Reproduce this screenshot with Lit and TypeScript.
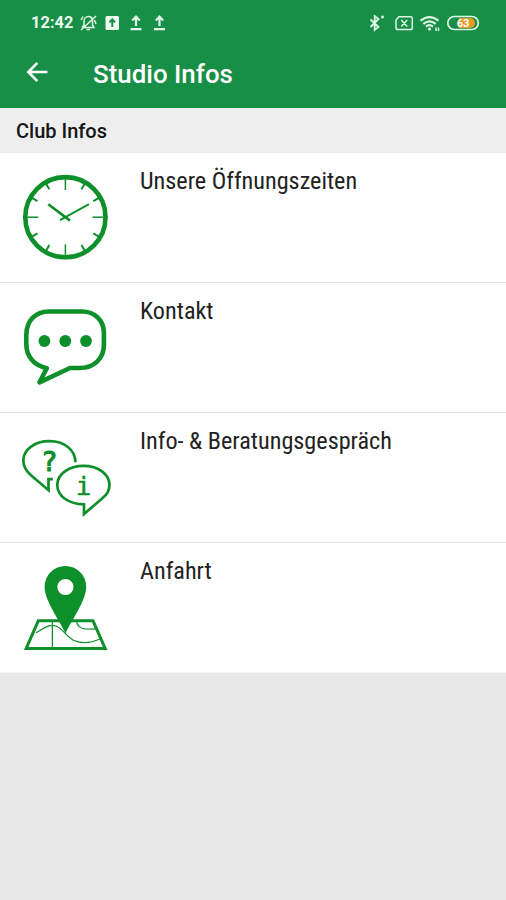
import { LitElement, html, svg, css } from "lit";
import { customElement } from "lit/decorators.js";

const clock = svg`
  <circle cx="65.4" cy="64.2" r="40.1" stroke-width="4.6" />
  ${[...Array(12).keys()].map((i) =>
    i % 3 === 0
      ? svg`<path d="M65.4 26V37" stroke-width="1.5" transform="rotate(${i * 30} 65.4 64.2)" />`
      : svg`<path d="M65.4 25V32" stroke-width="2" transform="rotate(${i * 30} 65.4 64.2)" />`
  )}
  <path d="M48.3 51.2 70 67.6" stroke-width="2.6" />
  <path d="M60 67.2 89 51.2" stroke-width="1.9" />`;

const chat = svg`
  <path stroke-width="4.6" stroke-linejoin="round" d="M49 28.5H82C95 28.5 103.9 37.5 103.9 50V62C103.9 75.5 94 85 79.5 85H70L39.5 99.3 46.8 85.2C34.5 82.5 26.3 74 26.3 61V52C26.3 37.5 35.5 28.5 49 28.5Z" />
  <g fill="currentColor" stroke="none">
    <circle cx="44.4" cy="58" r="5.9" /><circle cx="65.3" cy="58" r="5.9" /><circle cx="86" cy="58" r="5.9" />
  </g>`;

const advice = svg`
  <path stroke-width="2.7" d="M75.4 49.2C75.4 36.5 64 28.2 49.5 28.2C34.5 28.2 23.3 36.8 23.3 47.5C23.3 53.5 26.5 58.5 31.5 62.8L48.5 77.2V66.2H52.8" />
  <path stroke-width="2.7" d="M84 101V91.3C68.5 91.3 57.3 83 57.3 72C57.3 61 68.7 52.9 83.5 52.9C98.3 52.9 109.5 61 109.5 72C109.5 77.2 106.8 81.8 102.4 85.2Z" />
  <g class="glyph"><text class="wide" x="49.5" y="57.8" font-size="27">?</text><text x="83.5" y="82.4" font-size="25">i</text></g>`;

const map = svg`
  <path stroke-width="3" d="M38.3 77.8H93L105.2 105.5H26.2Z" />
  <path stroke-width="1.3" d="M52.4 78V105M36 89.8C43 86 49 80.5 56 83C63 85.5 66.5 94 74 97.5C82 101 92 99.5 100 96M76.5 78.5C77.5 84 81 85.5 85 85.8L95 86.1" />
  <path fill="currentColor" stroke="none" fill-rule="evenodd" d="M65.5 90.5C60 78 44.6 58 44.6 43.8A20.8 20.8 0 0 1 86.2 43.8C86.2 58 71 78 65.5 90.5ZM65.4 35.9A8.1 8.1 0 1 0 65.4 52.1A8.1 8.1 0 1 0 65.4 35.9Z" />`;

const entries = [
  { label: "Unsere Öffnungszeiten", icon: clock },
  { label: "Kontakt", icon: chat },
  { label: "Info- & Beratungsgespräch", icon: advice },
  { label: "Anfahrt", icon: map },
];

@customElement("app-root")
export class AppRoot extends LitElement {
  static styles = css`
    :host { display: flex; flex-direction: column; height: 900px; background: #e8e8e8; font-family: Roboto, "Liberation Sans", sans-serif; overflow: hidden; }
    header { height: 108px; background: #178f46; color: #fff; display: flex; flex-direction: column; }
    .status { height: 45px; display: flex; align-items: center; padding: 0 26px 0 31px; box-sizing: border-box; }
    .time { font-size: 16.3px; font-weight: 700; letter-spacing: .1px; width: 48px; line-height: 20px; color: #effcf2; }
    .spacer { flex: 1; }
    .status svg { display: block; fill: none; stroke: #dff5e5; }
    .charge { fill: #fff; stroke: none; font-size: 11px; font-weight: 700; text-anchor: middle; }
    .bar { height: 57px; display: flex; align-items: center; padding-left: 25px; }
    .back { width: 24px; height: 24px; fill: none; stroke: #fff; stroke-width: 2.6; margin-bottom: 3px; }
    h1 { margin: 0 0 0 44px; font-size: 25.9px; line-height: 30px; font-weight: 500; }
    h2 { margin: 0; height: 45px; line-height: 46px; padding-left: 16px; background: #eee; color: #151515; font-size: 20px; font-weight: 500; }
    ul { margin: 0; padding: 0; list-style: none; background: #fff; }
    li { height: 130px; display: flex; box-sizing: border-box; border-bottom: 1px solid #e4e4e4; }
    li:last-child { border-bottom-color: #f4f4f4; }
    .picture { width: 130px; height: 129px; flex: none; fill: none; stroke: currentColor; color: #0d8f2a; }
    .glyph { fill: currentColor; stroke: currentColor; stroke-width: .6px; font-family: "DejaVu Sans Mono", monospace; text-anchor: middle; }
    .wide { stroke-width: 1.1px; }
    .label { margin: 12px 0 0 10px; font-family: "Roboto Condensed", Roboto, sans-serif; font-stretch: 75%; font-weight: 400; font-size: 24.2px; line-height: 32px; color: #222; white-space: nowrap; height: 32px; }
  `;

  render() {
    return html`
      <header>
        <div class="status">
          <span class="time">12:42</span>
          <svg width="92" height="24" viewBox="79 11 92 24">
            <path stroke-width="1.5" d="M82 27.5H94L92.5 25V21C92.5 18 90.5 16.5 88.5 16.5C86 16.5 84 18.5 84 21V25L82 27.5M86.5 29.5H90M81 30 96 16M81 20 83 16.5M96 24 94.5 20" />
            <rect x="105.5" y="16" width="13.5" height="14" rx="1.5" fill="#effcf2" stroke="none" />
            <path stroke="#178f46" stroke-width="2" d="M112.3 27V19.5M109.5 22.3 112.3 19.4 115.1 22.3" />
            <path stroke-width="2.2" d="M136 26V17M132.3 20.5 136 16.7 139.7 20.5M130.5 29.2H141.5M159.5 26V17M155.8 20.5 159.5 16.7 163.2 20.5M154 29.2H165" />
          </svg>
          <span class="spacer"></span>
          <svg width="112" height="24" viewBox="368 11 112 24">
            <path stroke-width="1.8" d="M370.5 19.5 378.5 27 374.7 30V16L378.5 19 370.5 27" />
            <path stroke-width="1.5" d="M381 17H384M382.5 15.5V18.5" />
            <path stroke-width="1.5" d="M399 16.8H410.5Q412.3 16.8 412.3 18.6V27.7Q412.3 29.5 410.5 29.5H397.8Q396 29.5 396 27.7V20ZM401.3 20 407.2 26.4M407.2 20 401.3 26.4" />
            <path stroke-width="2.2" d="M420.5 20.7Q429.5 13.5 438.5 20.7M423.3 23.8Q429.5 18.8 435.7 23.8M426 26.6Q429.5 23.8 433 26.6" />
            <circle cx="429.5" cy="29" r="1.5" fill="#effcf2" stroke="none" />
            <path stroke-width="1.5" d="M436 27.5V31M438.5 27.5V31" />
            <path fill="#eb9a24" stroke="none" d="M459 18H470A5 5 0 0 1 470 28H459Z" />
            <rect x="447.8" y="16.5" width="30.5" height="13" rx="6.5" stroke-width="1.7" />
            <text class="charge" x="463" y="27">63</text>
          </svg>
        </div>
        <div class="bar">
          <svg class="back" viewBox="0 0 24 24"><path d="M22.5 12H3.5M12.3 2.9 3.3 12 12.3 21.1" /></svg>
          <h1>Studio Infos</h1>
        </div>
      </header>
      <h2>Club Infos</h2>
      <ul>
        ${entries.map(
          (e) => html`<li>
            <svg class="picture" viewBox="0 0 130 129">${e.icon}</svg>
            <span class="label">${e.label}</span>
          </li>`
        )}
      </ul>
    `;
  }
}
